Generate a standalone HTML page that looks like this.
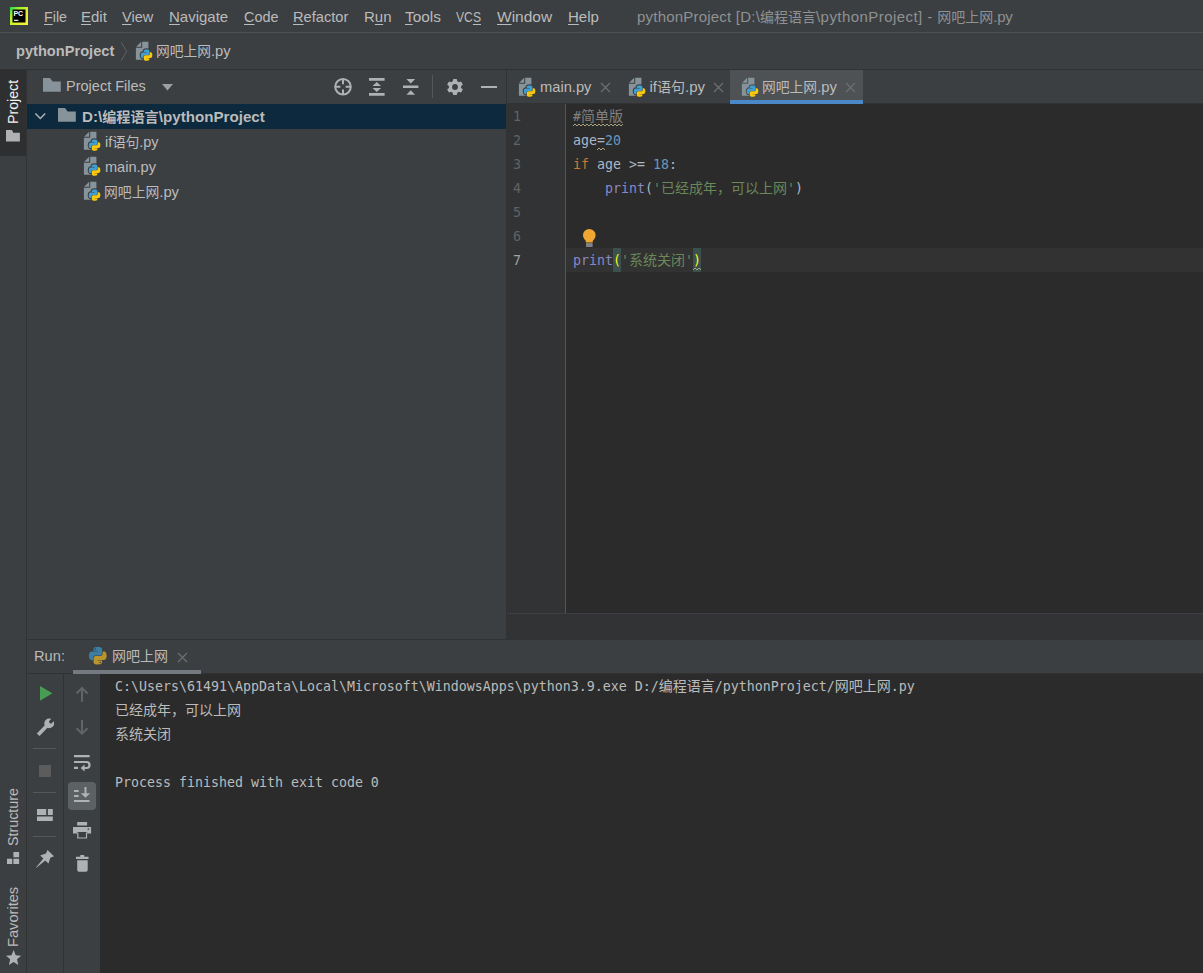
<!DOCTYPE html>
<html lang="zh"><head><meta charset="utf-8"><title>pythonProject</title>
<style>
*{box-sizing:border-box;margin:0;padding:0}
html,body{width:1203px;height:973px;overflow:hidden;background:#3c3f41}
body{position:relative;font-family:"Liberation Sans","Noto Sans CJK SC",sans-serif;font-size:15px;color:#bbbbbb}
.abs{position:absolute}
.t{position:absolute;white-space:pre;line-height:20px;height:20px;transform-origin:0 0}
.c{font-size:14px;line-height:1px;letter-spacing:0;font-family:"Liberation Sans","Noto Sans CJK SC",sans-serif}
.mono{font-family:"DejaVu Sans Mono","Liberation Mono","Noto Sans CJK SC",monospace;font-size:13.29px}
.mono .c{font-size:14px;line-height:1px;letter-spacing:0;font-family:"Liberation Mono","Noto Sans CJK SC",monospace}
u{text-decoration:underline;text-underline-offset:2px;text-decoration-thickness:1px}
svg{position:absolute;overflow:visible;color:#3c3f41}
.v{transform-origin:0 0;transform:rotate(-90deg)}
</style></head><body>

<!-- MENU BAR -->
<div class="abs" style="left:0;top:32px;width:1203px;height:1px;background:#515151"></div>
<div class="t m" id="m1" style="left:44px;top:7px;transform:scaleX(0.95)"><u>F</u>ile</div>
<div class="t m" id="m2" style="left:81px;top:7px"><u>E</u>dit</div>
<div class="t m" id="m3" style="left:122px;top:7px;transform:scaleX(0.97)"><u>V</u>iew</div>
<div class="t m" id="m4" style="left:169px;top:7px"><u>N</u>avigate</div>
<div class="t m" id="m5" style="left:244px;top:7px;transform:scaleX(0.963)"><u>C</u>ode</div>
<div class="t m" id="m6" style="left:293px;top:7px;transform:scaleX(0.975)"><u>R</u>efactor</div>
<div class="t m" id="m7" style="left:364px;top:7px">R<u>u</u>n</div>
<div class="t m" id="m8" style="left:405px;top:7px;transform:scaleX(1.027)"><u>T</u>ools</div>
<div class="t m" id="m9" style="left:456px;top:7px;transform:scaleX(0.81)">VC<u>S</u></div>
<div class="t m" id="m10" style="left:497px;top:7px;transform:scaleX(1.032)"><u>W</u>indow</div>
<div class="t m" id="m11" style="left:568px;top:7px"><u>H</u>elp</div>
<div class="t" id="title" style="left:637px;top:7px;color:#8f9193"><span style="letter-spacing:0.21px">pythonProject [D:\</span><span class="c">编程语言</span><span style="letter-spacing:0.44px">\pythonProject] - </span><span class="c">网吧上网</span><span style="letter-spacing:-0.3px">.py</span></div>

<!-- NAV BAR -->
<div class="abs" style="left:0;top:69px;width:1203px;height:1px;background:#323232"></div>
<div class="t" id="crumb1" style="left:16.3px;top:41px;font-weight:bold;transform:scaleX(0.975)">pythonProject</div>
<div class="t" id="crumb2" style="left:156.2px;top:41px;transform:scaleX(0.981)"><span class="c">网吧上网</span>.py</div>

<!-- LEFT STRIPE -->
<div class="abs" style="left:0;top:70px;width:26px;height:86px;background:#2d2f30"></div>
<div class="abs" style="left:26px;top:70px;width:1px;height:903px;background:#323232"></div>

<!-- PROJECT PANEL -->
<div class="t" id="pf" style="left:65.7px;top:76px;transform:scaleX(0.968)">Project Files</div>
<div class="abs" style="left:27px;top:104px;width:479px;height:25px;background:#0d293e"></div>
<div class="t" id="root" style="left:81.6px;top:106.5px;font-weight:bold;transform:scaleX(1.01)">D:\<span class="c">编程语言</span>\pythonProject</div>
<div class="t" id="f1" style="left:105px;top:131.5px;transform:scaleX(0.964)">if<span class="c">语句</span>.py</div>
<div class="t" id="f2" style="left:105px;top:156.5px;transform:scaleX(0.97)">main.py</div>
<div class="t" id="f3" style="left:104.2px;top:181.5px;transform:scaleX(0.987)"><span class="c">网吧上网</span>.py</div>
<div class="abs" style="left:506px;top:70px;width:1px;height:569px;background:#323232"></div>

<!-- EDITOR TABS -->
<div class="abs" style="left:507px;top:103px;width:696px;height:1px;background:#323232"></div>
<div class="abs" style="left:730px;top:70px;width:133px;height:30px;background:#4e5254"></div>
<div class="abs" style="left:730px;top:100px;width:133px;height:4px;background:#4a88c7"></div>
<div class="t" id="tab1" style="left:539.8px;top:76.5px;transform:scaleX(0.98)">main.py</div>
<div class="t" id="tab2" style="left:649.5px;top:76.5px">if<span class="c">语句</span>.py</div>
<div class="t" id="tab3" style="left:762px;top:76.5px;transform:scaleX(0.985)"><span class="c">网吧上网</span>.py</div>

<!-- EDITOR -->
<div class="abs" style="left:507px;top:104px;width:696px;height:509px;background:#2b2b2b"></div>
<div class="abs" style="left:507px;top:104px;width:58px;height:509px;background:#313335"></div>
<div class="abs" style="left:565px;top:104px;width:1px;height:509px;background:#555555"></div>
<div class="abs" style="left:566px;top:248px;width:637px;height:24px;background:#323232"></div>
<div class="abs" style="left:613px;top:248px;width:8px;height:24px;background:#3b514d"></div>
<div class="abs" style="left:693px;top:248px;width:8px;height:24px;background:#3b514d"></div>
<div id="code" class="mono">
<div class="t ln" style="left:513px;top:107px;color:#606366">1</div>
<div class="t ln" style="left:513px;top:131px;color:#606366">2</div>
<div class="t ln" style="left:513px;top:155px;color:#606366">3</div>
<div class="t ln" style="left:513px;top:179px;color:#606366">4</div>
<div class="t ln" style="left:513px;top:203px;color:#606366">5</div>
<div class="t ln" style="left:513px;top:227px;color:#606366">6</div>
<div class="t ln" style="left:513px;top:251px;color:#a4a3a3">7</div>
<div class="t cl" id="c1" style="left:573px;top:107px;color:#808080">#<span class="c">简单版</span></div>
<div class="t cl" id="c2" style="left:573px;top:131px;color:#a9b7c6">age=<span style="color:#6897bb">20</span></div>
<div class="t cl" id="c3" style="left:573px;top:155px;color:#a9b7c6"><span style="color:#cc7832">if</span> age &gt;= <span style="color:#6897bb">18</span>:</div>
<div class="t cl" id="c4" style="left:573px;top:179px;color:#a9b7c6">    <span style="color:#8888c6">print</span>(<span style="color:#6a8759">'<span class="c">已经成年，可以上网</span>'</span>)</div>
<div class="t cl" id="c7" style="left:573px;top:251px;color:#a9b7c6"><span style="color:#8888c6">print</span><span style="color:#ffef28">(</span><span style="color:#6a8759">'<span class="c">系统关闭</span>'</span><span style="color:#ffef28">)</span></div>
</div>
<div class="abs" style="left:507px;top:613px;width:696px;height:26px;background:#313335"></div>
<div class="abs" style="left:507px;top:613px;width:696px;height:1px;background:#3d3f42"></div>

<!-- RUN PANEL -->
<div class="abs" style="left:27px;top:639px;width:1176px;height:1px;background:#323232"></div>
<div class="t" id="runlbl" style="left:33.7px;top:646px;transform:scaleX(0.977)">Run:</div>
<div class="t" id="runtab" style="left:112px;top:646px"><span class="c">网吧上网</span></div>
<div class="abs" style="left:27px;top:673px;width:1176px;height:1px;background:#323232"></div>
<div class="abs" style="left:73px;top:670px;width:128px;height:4px;background:#747a80"></div>
<div class="abs" style="left:63px;top:674px;width:1px;height:299px;background:#323232"></div>
<div class="abs" style="left:100px;top:674px;width:1103px;height:299px;background:#2b2b2b"></div>
<div id="console" class="mono" style="color:#bbbbbb">
<div class="t" id="o1" style="left:115px;top:677px">C:\Users\61491\AppData\Local\Microsoft\WindowsApps\python3.9.exe D:/<span class="c">编程语言</span>/pythonProject/<span class="c">网吧上网</span>.py</div>
<div class="t" id="o2" style="left:115px;top:701px"><span class="c">已经成年，可以上网</span></div>
<div class="t" id="o3" style="left:115px;top:725px"><span class="c">系统关闭</span></div>
<div class="t" id="o4" style="left:115px;top:773px">Process finished with exit code 0</div>
</div>

<!-- LEFT STRIPE LABELS -->
<div class="t v" id="vproj" style="left:3px;top:124px;color:#f2f2f2;transform:rotate(-90deg) scaleX(0.945)">Project</div>
<div class="t v" id="vstruct" style="left:3px;top:846.3px;transform:rotate(-90deg) scaleX(0.953)">Structure</div>
<div class="t v" id="vfav" style="left:3px;top:946.5px;transform:rotate(-90deg) scaleX(0.975)">Favorites</div>

<!--ICONS-->
<svg width="0" height="0" style="left:0;top:0"><defs>
<linearGradient id="pcg" x1="0" y1="0" x2="1" y2="1"><stop offset="0" stop-color="#14dc50"/><stop offset="0.28" stop-color="#a4f030"/><stop offset="0.6" stop-color="#dcf028"/><stop offset="1" stop-color="#f8f040"/></linearGradient>
<g id="py"><path fill="#40a0d4" d="M54.9 0C26.8 0 28.6 12.2 28.6 12.2l.03 12.6h26.8v3.8H18S0 26.5 0 54.9c0 28.4 15.7 27.4 15.7 27.4h9.4V69.1s-.5-15.7 15.4-15.7h26.6s14.9.24 14.9-14.4V14.8S84.3 0 54.9 0z"/><path fill="#f9c80e" d="M55.7 109.8c28.1 0 26.3-12.2 26.3-12.2l-.03-12.6H55.2v-3.8h37.4s18 2 18-26.3c0-28.4-15.7-27.4-15.7-27.4h-9.4v13.2s.5 15.7-15.4 15.7H43.5s-14.9-.24-14.9 14.4v24.2s-2.3 14.8 27.1 14.8z"/></g>
<g id="pyd"><path fill="#3c7ea4" d="M54.9 0C26.8 0 28.6 12.2 28.6 12.2l.03 12.6h26.8v3.8H18S0 26.5 0 54.9c0 28.4 15.7 27.4 15.7 27.4h9.4V69.1s-.5-15.7 15.4-15.7h26.6s14.9.24 14.9-14.4V14.8S84.3 0 54.9 0zM40.1 8.5c2.7 0 4.8 2.2 4.8 4.8s-2.2 4.8-4.8 4.8-4.8-2.2-4.8-4.8 2.2-4.8 4.8-4.8z"/><path fill="#b9952b" d="M55.7 109.8c28.1 0 26.3-12.2 26.3-12.2l-.03-12.6H55.2v-3.8h37.4s18 2 18-26.3c0-28.4-15.7-27.4-15.7-27.4h-9.4v13.2s.5 15.7-15.4 15.7H43.5s-14.9-.24-14.9 14.4v24.2s-2.3 14.8 27.1 14.8zm14.8-8.5c-2.7 0-4.8-2.2-4.8-4.8s2.2-4.8 4.8-4.8 4.8 2.2 4.8 4.8-2.2 4.8-4.8 4.8z"/></g>
<g id="pyf"><path fill="#87939a" d="M0.2 4.7L5.2 -0.2V4.7zM6.2 -0.2H12.4V17.8H-0.1V5.7H6.2z"/><use href="#py" transform="translate(4.8 7.4) scale(0.1045)" stroke="currentColor" stroke-width="21" stroke-linejoin="round"/><use href="#py" transform="translate(4.8 7.4) scale(0.1045)"/></g>
<g id="fold"><path fill="#87939a" d="M0 0H7L9.6 3.4H17.8V13.7H0z"/></g>
<g id="cx"><path d="M0 0L9 9M9 0L0 9" stroke="#6e6e6e" stroke-width="1.2" fill="none"/></g>
</defs></svg>

<!-- app logo -->
<svg style="left:10px;top:7px" width="18" height="18" viewBox="0 0 18 18"><rect width="18" height="18" fill="url(#pcg)"/><rect x="2.5" y="2.5" width="13" height="13" fill="#000"/><text x="3.4" y="9" font-family="Liberation Sans, sans-serif" font-weight="bold" font-size="7" fill="#fff">PC</text><rect x="4" y="12.800" width="4.400" height="1.100" fill="#fff"/></svg>

<!-- nav bar -->
<svg style="left:121px;top:42px" width="6" height="19"><path d="M0.3 0.3L5.6 9.4L0.3 18.6" stroke="#606365" stroke-width="1" fill="none"/></svg>
<svg style="left:136px;top:42.2px" width="17" height="20"><use href="#pyf"/></svg>

<!-- project header -->
<svg style="left:43px;top:78.2px" width="18" height="14"><use href="#fold"/></svg>
<svg style="left:161.6px;top:84px" width="11" height="7"><path d="M0 0H11L5.5 6.5z" fill="#9da0a3"/></svg>
<svg style="left:334px;top:78px" width="18" height="18" viewBox="0 0 18 18"><circle cx="9" cy="8.8" r="7.8" fill="none" stroke="#afb1b3" stroke-width="2"/><path d="M9 1v5.200M9 11.400v5.200M1.2 8.800h5.200M11.600 8.800h5.200" stroke="#afb1b3" stroke-width="2" fill="none"/></svg>
<svg style="left:369.3px;top:78px" width="16" height="18"><path fill="#afb1b3" d="M0 0H15.6V2.7H0zM0 15H15.6V17.8H0zM7.8 4L12.1 8H3.5zM7.8 14L12.1 10H3.5z"/></svg>
<svg style="left:403.2px;top:79.1px" width="16" height="16"><path fill="#afb1b3" d="M0 6.6H15.4V9.1H0zM7.75 4.5L12.1 0H3.4zM7.75 11.2L12.1 15.8H3.4z"/></svg>
<div class="abs" style="left:432px;top:75px;width:1px;height:23px;background:#55585a"></div>
<svg style="left:447px;top:79px" width="16" height="16" viewBox="-8 -8 16 16"><g fill="#afb1b3"><circle r="6.2"/><g id="gt"><rect x="-2.1" y="-8" width="4.2" height="16" rx="0.9"/></g><use href="#gt" transform="rotate(60)"/><use href="#gt" transform="rotate(120)"/></g><circle r="2.9" fill="#3c3f41"/></svg>
<div class="abs" style="left:481.1px;top:85.7px;width:15.5px;height:2.5px;background:#afb1b3"></div>

<!-- tree -->
<svg style="left:34.7px;top:113.2px" width="11" height="7"><path d="M0.4 0.4L5.3 5.5L10.2 0.4" stroke="#afb1b3" stroke-width="1.5" fill="none"/></svg>
<svg style="left:58.2px;top:108.3px" width="18" height="14"><use href="#fold"/></svg>
<svg style="left:83.8px;top:132.2px" width="17" height="20"><use href="#pyf"/></svg>
<svg style="left:83.8px;top:157.2px" width="17" height="20"><use href="#pyf"/></svg>
<svg style="left:83.8px;top:182.2px" width="17" height="20"><use href="#pyf"/></svg>

<!-- editor tabs -->
<svg style="left:519px;top:78.2px" width="17" height="20"><use href="#pyf"/></svg>
<svg style="left:600.6px;top:82.6px" width="9" height="9"><use href="#cx"/></svg>
<svg style="left:629px;top:78.2px" width="17" height="20"><use href="#pyf"/></svg>
<svg style="left:713.5px;top:82.6px" width="9" height="9"><use href="#cx"/></svg>
<svg style="left:741.6px;top:78.2px;color:#4e5254" width="17" height="20"><use href="#pyf"/></svg>
<svg style="left:845.5px;top:82.6px" width="9" height="9"><use href="#cx"/></svg>

<!-- editor decorations -->
<svg style="left:573px;top:123px" width="50" height="4"><path d="M0 3L2 1L4 3L6 1L8 3L10 1L12 3L14 1L16 3L18 1L20 3L22 1L24 3L26 1L28 3L30 1L32 3L34 1L36 3L38 1L40 3L42 1L44 3L46 1L48 3L50 1" stroke="#a8a47c" stroke-width="1" fill="none"/></svg>
<svg style="left:597px;top:147px" width="8" height="4"><path d="M0 3L2 1L4 3L6 1L8 3" stroke="#a8a47c" stroke-width="1" fill="none"/></svg>
<svg style="left:693px;top:267px" width="8" height="4"><path d="M0 3L2 1L4 3L6 1L8 3" stroke="#a8a47c" stroke-width="1" fill="none"/></svg>
<svg style="left:582.8px;top:228.9px" width="13" height="18"><path fill="#f0a732" d="M6.3 0A6.3 6.3 0 0 0 0 6.3C0 8.6 1.3 10.3 2.6 11.5L3 13.4H9.6L10 11.5C11.3 10.3 12.6 8.6 12.6 6.3A6.3 6.3 0 0 0 6.3 0z"/><rect x="3" y="14.4" width="6.6" height="1.3" fill="#aeb0b2"/><rect x="3" y="16.4" width="6.6" height="1.3" fill="#aeb0b2"/></svg>

<!-- run header -->
<svg style="left:89.3px;top:647.1px" width="18" height="18"><use href="#pyd" transform="scale(0.1595)"/></svg>
<svg style="left:177.6px;top:652.6px" width="9" height="9"><use href="#cx"/></svg>

<!-- run toolbar 1 -->
<svg style="left:39.8px;top:685.5px" width="13" height="15"><path d="M0 0L12.4 7.35L0 14.7z" fill="#499c54"/></svg>
<svg style="left:36px;top:717.5px" width="19" height="19" viewBox="0 0 19 19"><path d="M2.2 16.800L11.600 7" stroke="#afb1b3" stroke-width="3.700" fill="none"/><circle cx="13.2" cy="5.400" r="4.900" fill="#afb1b3"/><path d="M19 -0.400L14.800 3.800" stroke="#3c3f41" stroke-width="3.400" stroke-linecap="round" fill="none"/></svg>
<div class="abs" style="left:33px;top:748px;width:23px;height:1px;background:#55585a"></div>
<div class="abs" style="left:38.8px;top:764.8px;width:12.4px;height:12.4px;background:#5c5c5c"></div>
<div class="abs" style="left:33px;top:792px;width:23px;height:1px;background:#55585a"></div>
<svg style="left:37.1px;top:808.8px" width="16" height="13"><path fill="#afb1b3" d="M0 0H9.2V6.1H0zM10.9 0H15.8V6.1H10.9zM0 7.6H15.8V12.1H0z"/></svg>
<div class="abs" style="left:33px;top:836px;width:23px;height:1px;background:#55585a"></div>
<svg style="left:36px;top:850px" width="18" height="18" viewBox="0 0 18 18"><path fill="#afb1b3" d="M11.5 0L18 6.300L14.300 7.800L12.500 13.600L9.200 10.400L0.400 17.800L0 17.400L7.400 8.600L4.200 5.400L10 3.600z"/></svg>

<!-- run toolbar 2 -->
<svg style="left:76px;top:686.8px" width="12" height="15"><path d="M6 14.700V0.700M0.500 6.500L6 1L11.500 6.500" stroke="#626466" stroke-width="2" fill="none"/></svg>
<svg style="left:76px;top:720.4px" width="12" height="15"><path d="M6 0V14M0.500 8.200L6 13.700L11.500 8.200" stroke="#626466" stroke-width="2" fill="none"/></svg>
<svg style="left:74.2px;top:754.6px" width="17" height="18" viewBox="0 0 17 18"><path fill="#afb1b3" d="M0 0H15.600V2.200H0zM0 11.800H4V14H0z"/><path d="M0 7H12.500a3 3 0 0 1 0 6H9.500" stroke="#afb1b3" stroke-width="2.200" fill="none"/><path fill="#afb1b3" d="M10.600 9.600V16.600L6.600 13.100z"/></svg>
<div class="abs" style="left:68px;top:782px;width:28px;height:28px;border-radius:4px;background:#5c6164"></div>
<svg style="left:74.4px;top:787px" width="17" height="16"><path fill="#afb1b3" d="M0 3H4.700V5H0zM0 8H4.700V10H0zM0 13H15.500V15H0zM10.500 0H12.500V6.200H16.300L11.500 10.800L6.700 6.200H10.500z"/></svg>
<svg style="left:72.9px;top:822.4px" width="19" height="17"><path fill="#afb1b3" d="M4.200 0H14.100V3.600H4.200zM0 5H18.100V11.500H14.100V10H4.200V11.500H0z"/><path d="M4.800 10.500V16H13.500V10.500" stroke="#afb1b3" stroke-width="1.200" fill="none"/><rect x="14.600" y="6.400" width="1.600" height="1.300" fill="#3c3f41"/></svg>
<svg style="left:75.7px;top:854.8px" width="13" height="17"><path fill="#afb1b3" d="M4.300 0H8.200V1.700H12.500V4H0V1.700H4.300zM1.200 5.200H11.700V15a1.700 1.700 0 0 1-1.700 1.700H2.900A1.700 1.700 0 0 1 1.200 15z"/></svg>

<!-- left stripe icons -->
<svg style="left:6px;top:130.2px" width="14" height="12"><path fill="#afb1b3" d="M0 0H6L7.200 2.800H13.900V11.600H0z"/></svg>
<svg style="left:7.100px;top:851.8px" width="13" height="12"><path fill="#afb1b3" d="M6.400 0H12.100V5.200H6.400zM0 6.700H5.200V11.900H0zM6.400 6.700H12.100V11.900H6.400z"/></svg>
<svg style="left:5.600px;top:950.2px" width="16" height="16" viewBox="0 0 16 16"><path fill="#afb1b3" d="M7.600 0L9.700 5.300L15.200 5.700L11 9.300L12.300 14.900L7.600 11.900L2.900 14.900L4.200 9.300L0 5.700L5.500 5.300z"/></svg>
<!--/ICONS-->
</body></html>
